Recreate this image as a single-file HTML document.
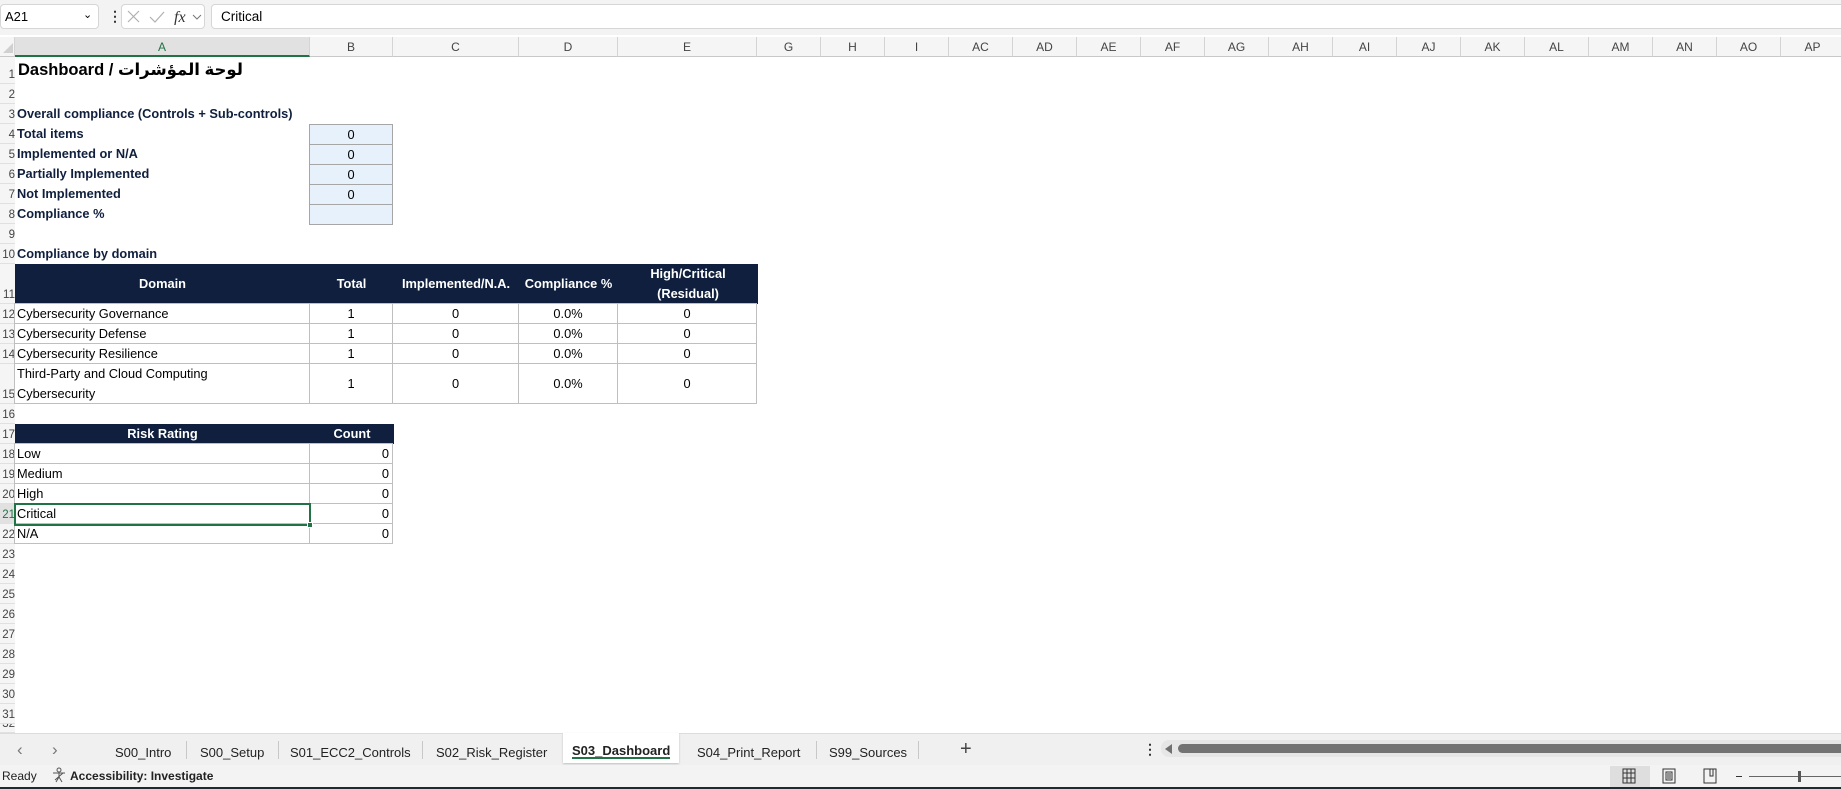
<!DOCTYPE html>
<html><head><meta charset="utf-8">
<style>
*{margin:0;padding:0;box-sizing:border-box}
body{width:1841px;height:789px;overflow:hidden;background:#fff;position:relative;font-family:"Liberation Sans Narrow","Liberation Sans",sans-serif;font-size:12.8px;color:#000}
.a{position:absolute}
.ch{position:absolute;top:37px;height:20px;border-right:1px solid #d4d4d4;color:#444;font-family:"Liberation Sans",sans-serif;font-size:12px;text-align:center;line-height:20px;background:#f5f5f5;border-bottom:1px solid #c8c8c8}
.rh{position:absolute;left:0;width:15px;overflow:hidden;color:#444;font-family:"Liberation Sans",sans-serif;font-size:11.5px;text-align:right;background:#f5f5f5;border-bottom:1px solid #e0e0e0;white-space:nowrap;display:flex;align-items:flex-end;justify-content:flex-end;padding-bottom:2px}
.lbl{position:absolute;left:17px;font-weight:bold;color:#0f1f3d;line-height:20px;white-space:nowrap}
.c{position:absolute;border:1px solid #bfbfbf;display:flex;align-items:center;justify-content:center;white-space:nowrap;margin-left:-1px;margin-top:-1px}
.h{position:absolute;background:#0f1f3d;color:#fff;font-weight:bold;display:flex;align-items:center;justify-content:center;text-align:center;line-height:20px}
.l{justify-content:flex-start;padding-left:2px}
.r{justify-content:flex-end;padding-right:3px}
.tab{position:absolute;top:745px;font-size:13px;color:#222;white-space:nowrap}
.sep{position:absolute;top:741px;width:1px;height:18px;background:#c8c8c8}
</style></head><body>
<div class="a" style="left:0;top:0;width:1841px;height:35px;background:#f3f3f3"></div>
<div class="a" style="left:0;top:4px;width:99px;height:25px;background:#fff;border:1px solid #d6d6d6;border-radius:4px;font-family:'Liberation Sans',sans-serif;font-size:13px;line-height:23px;padding-left:4px">A21<span style="position:absolute;left:82px;top:-1px;font-size:11px">&#8964;</span></div>
<div class="a" style="left:108px;top:8px;font-family:'Liberation Sans',sans-serif;font-size:14px;font-weight:bold;color:#333">&#8942;</div>
<div class="a" style="left:121px;top:4px;width:84px;height:25px;background:#fff;border:1px solid #d6d6d6;border-radius:4px"></div>
<svg class="a" style="left:126px;top:9px" width="80" height="16"><path d="M2 2L13 13M13 2L2 13" stroke="#b0b0b0" stroke-width="1.2" fill="none"/><path d="M24 8L29 13L38 3" stroke="#b0b0b0" stroke-width="1.2" fill="none"/><text x="48" y="13" font-family="Liberation Serif" font-style="italic" font-size="16" fill="#333">fx</text><path d="M67 6L71 10L75 6" stroke="#777" fill="none"/></svg>
<div class="a" style="left:211px;top:4px;width:1640px;height:25px;background:#fff;border:1px solid #d6d6d6;border-radius:4px;font-family:'Liberation Sans',sans-serif;font-size:13.5px;line-height:23px;padding-left:9px">Critical</div>
<div class="a" style="left:0;top:37px;width:15px;height:20px;background:#f5f5f5;border-right:1px solid #d4d4d4;border-bottom:1px solid #c8c8c8"></div>
<svg class="a" style="left:2px;top:42px" width="12" height="12"><path d="M11 1L11 11L1 11Z" fill="#d0d0d0"/></svg>
<div class="ch" style="left:15px;width:295px;background:#e1e1e1;color:#217346;border-bottom:2px solid #217346">A</div>
<div class="ch" style="left:310px;width:83px">B</div>
<div class="ch" style="left:393px;width:126px">C</div>
<div class="ch" style="left:519px;width:99px">D</div>
<div class="ch" style="left:618px;width:139px">E</div>
<div class="ch" style="left:757px;width:64px">G</div>
<div class="ch" style="left:821px;width:64px">H</div>
<div class="ch" style="left:885px;width:64px">I</div>
<div class="ch" style="left:949px;width:64px">AC</div>
<div class="ch" style="left:1013px;width:64px">AD</div>
<div class="ch" style="left:1077px;width:64px">AE</div>
<div class="ch" style="left:1141px;width:64px">AF</div>
<div class="ch" style="left:1205px;width:64px">AG</div>
<div class="ch" style="left:1269px;width:64px">AH</div>
<div class="ch" style="left:1333px;width:64px">AI</div>
<div class="ch" style="left:1397px;width:64px">AJ</div>
<div class="ch" style="left:1461px;width:64px">AK</div>
<div class="ch" style="left:1525px;width:64px">AL</div>
<div class="ch" style="left:1589px;width:64px">AM</div>
<div class="ch" style="left:1653px;width:64px">AN</div>
<div class="ch" style="left:1717px;width:64px">AO</div>
<div class="ch" style="left:1781px;width:64px">AP</div>
<div class="a" style="left:14px;top:57px;width:1px;height:676px;background:#d4d4d4"></div>
<div class="rh" style="top:57px;height:27px">1</div>
<div class="rh" style="top:84px;height:20px">2</div>
<div class="rh" style="top:104px;height:20px">3</div>
<div class="rh" style="top:124px;height:20px">4</div>
<div class="rh" style="top:144px;height:20px">5</div>
<div class="rh" style="top:164px;height:20px">6</div>
<div class="rh" style="top:184px;height:20px">7</div>
<div class="rh" style="top:204px;height:20px">8</div>
<div class="rh" style="top:224px;height:20px">9</div>
<div class="rh" style="top:244px;height:20px">10</div>
<div class="rh" style="top:264px;height:40px">11</div>
<div class="rh" style="top:304px;height:20px">12</div>
<div class="rh" style="top:324px;height:20px">13</div>
<div class="rh" style="top:344px;height:20px">14</div>
<div class="rh" style="top:364px;height:40px">15</div>
<div class="rh" style="top:404px;height:20px">16</div>
<div class="rh" style="top:424px;height:20px">17</div>
<div class="rh" style="top:444px;height:20px">18</div>
<div class="rh" style="top:464px;height:20px">19</div>
<div class="rh" style="top:484px;height:20px">20</div>
<div class="rh" style="top:504px;height:20px;background:#e1e1e1;color:#217346">21</div>
<div class="rh" style="top:524px;height:20px">22</div>
<div class="rh" style="top:544px;height:20px">23</div>
<div class="rh" style="top:564px;height:20px">24</div>
<div class="rh" style="top:584px;height:20px">25</div>
<div class="rh" style="top:604px;height:20px">26</div>
<div class="rh" style="top:624px;height:20px">27</div>
<div class="rh" style="top:644px;height:20px">28</div>
<div class="rh" style="top:664px;height:20px">29</div>
<div class="rh" style="top:684px;height:20px">30</div>
<div class="rh" style="top:704px;height:20px">31</div>
<div class="rh" style="top:724px;height:9px">32</div>
<div class="a" style="left:18px;top:60px;font-family:'Liberation Sans','Noto Sans CJK SC','DejaVu Sans',sans-serif;font-size:16.5px;font-weight:bold;color:#000;white-space:nowrap">Dashboard / لوحة المؤشرات</div>
<div class="lbl" style="top:104px">Overall compliance (Controls + Sub-controls)</div>
<div class="lbl" style="top:124px">Total items</div>
<div class="lbl" style="top:144px">Implemented or N/A</div>
<div class="lbl" style="top:164px">Partially Implemented</div>
<div class="lbl" style="top:184px">Not Implemented</div>
<div class="lbl" style="top:204px">Compliance %</div>
<div class="lbl" style="top:244px">Compliance by domain</div>
<div class="c" style="left:310px;top:125px;width:84px;height:21px;background:#e7f1fb;border-color:#a6a6a6">0</div>
<div class="c" style="left:310px;top:145px;width:84px;height:21px;background:#e7f1fb;border-color:#a6a6a6">0</div>
<div class="c" style="left:310px;top:165px;width:84px;height:21px;background:#e7f1fb;border-color:#a6a6a6">0</div>
<div class="c" style="left:310px;top:185px;width:84px;height:21px;background:#e7f1fb;border-color:#a6a6a6">0</div>
<div class="c" style="left:310px;top:205px;width:84px;height:21px;background:#e7f1fb;border-color:#a6a6a6"></div>
<div class="h" style="left:15px;top:264px;width:743px;height:40px"></div>
<div class="h" style="left:15px;top:264px;width:295px;height:40px;background:none">Domain</div>
<div class="h" style="left:310px;top:264px;width:83px;height:40px;background:none">Total</div>
<div class="h" style="left:393px;top:264px;width:126px;height:40px;background:none">Implemented/N.A.</div>
<div class="h" style="left:519px;top:264px;width:99px;height:40px;background:none">Compliance %</div>
<div class="h" style="left:618px;top:264px;width:140px;height:40px;background:none">High/Critical<br>(Residual)</div>
<div class="c l" style="left:15px;top:304px;width:296px;height:21px">Cybersecurity Governance</div>
<div class="c" style="left:310px;top:304px;width:84px;height:21px">1</div>
<div class="c" style="left:393px;top:304px;width:127px;height:21px">0</div>
<div class="c" style="left:519px;top:304px;width:100px;height:21px">0.0%</div>
<div class="c" style="left:618px;top:304px;width:140px;height:21px">0</div>
<div class="c l" style="left:15px;top:324px;width:296px;height:21px">Cybersecurity Defense</div>
<div class="c" style="left:310px;top:324px;width:84px;height:21px">1</div>
<div class="c" style="left:393px;top:324px;width:127px;height:21px">0</div>
<div class="c" style="left:519px;top:324px;width:100px;height:21px">0.0%</div>
<div class="c" style="left:618px;top:324px;width:140px;height:21px">0</div>
<div class="c l" style="left:15px;top:344px;width:296px;height:21px">Cybersecurity Resilience</div>
<div class="c" style="left:310px;top:344px;width:84px;height:21px">1</div>
<div class="c" style="left:393px;top:344px;width:127px;height:21px">0</div>
<div class="c" style="left:519px;top:344px;width:100px;height:21px">0.0%</div>
<div class="c" style="left:618px;top:344px;width:140px;height:21px">0</div>
<div class="c l" style="left:15px;top:364px;width:296px;height:41px;white-space:normal;line-height:20px">Third-Party and Cloud Computing<br>Cybersecurity</div>
<div class="c" style="left:310px;top:364px;width:84px;height:41px">1</div>
<div class="c" style="left:393px;top:364px;width:127px;height:41px">0</div>
<div class="c" style="left:519px;top:364px;width:100px;height:41px">0.0%</div>
<div class="c" style="left:618px;top:364px;width:140px;height:41px">0</div>
<div class="h" style="left:15px;top:424px;width:295px;height:20px">Risk Rating</div>
<div class="h" style="left:310px;top:424px;width:84px;height:20px">Count</div>
<div class="c l" style="left:15px;top:444px;width:296px;height:21px">Low</div>
<div class="c r" style="left:310px;top:444px;width:84px;height:21px">0</div>
<div class="c l" style="left:15px;top:464px;width:296px;height:21px">Medium</div>
<div class="c r" style="left:310px;top:464px;width:84px;height:21px">0</div>
<div class="c l" style="left:15px;top:484px;width:296px;height:21px">High</div>
<div class="c r" style="left:310px;top:484px;width:84px;height:21px">0</div>
<div class="c l" style="left:15px;top:504px;width:296px;height:21px">Critical</div>
<div class="c r" style="left:310px;top:504px;width:84px;height:21px">0</div>
<div class="c l" style="left:15px;top:524px;width:296px;height:21px">N/A</div>
<div class="c r" style="left:310px;top:524px;width:84px;height:21px">0</div>
<div class="a" style="left:14px;top:503px;width:297px;height:23px;border:2px solid #217346"></div>
<div class="a" style="left:307px;top:522px;width:6px;height:6px;background:#217346;border:1px solid #fff"></div>
<div class="a" style="left:0;top:733px;width:1841px;height:32px;background:#f0f0f0;border-top:1px solid #dcdcdc"></div>
<div class="a" style="left:17px;top:740px;font-size:17px;color:#777;font-family:'Liberation Sans',sans-serif">&#8249;</div>
<div class="a" style="left:52px;top:740px;font-size:17px;color:#777;font-family:'Liberation Sans',sans-serif">&#8250;</div>
<div class="tab" style="left:115px">S00_Intro</div>
<div class="sep" style="left:186px"></div>
<div class="tab" style="left:200px">S00_Setup</div>
<div class="sep" style="left:278px"></div>
<div class="tab" style="left:290px">S01_ECC2_Controls</div>
<div class="sep" style="left:422px"></div>
<div class="tab" style="left:436px">S02_Risk_Register</div>
<div class="a" style="left:563px;top:733px;width:116px;height:30px;background:#fff;box-shadow:0 1px 2px rgba(0,0,0,.2)"></div>
<div class="tab" style="left:572px;top:743px;font-weight:bold">S03_Dashboard</div>
<div class="a" style="left:572px;top:757px;width:98px;height:2px;background:#217346"></div>
<div class="tab" style="left:697px">S04_Print_Report</div>
<div class="sep" style="left:816px"></div>
<div class="tab" style="left:829px">S99_Sources</div>
<div class="sep" style="left:918px"></div>
<div class="a" style="left:960px;top:738px;font-size:20px;color:#444;font-family:'Liberation Sans',sans-serif">+</div>
<div class="a" style="left:1143px;top:741px;font-size:14px;font-weight:bold;color:#333;font-family:'Liberation Sans',sans-serif">&#8942;</div>
<div class="a" style="left:1161px;top:740px;width:690px;height:17px;background:#e6e6e6;border-radius:8px"></div>
<svg class="a" style="left:1165px;top:744px" width="8" height="10"><path d="M7 0L0 5L7 10Z" fill="#707070"/></svg>
<div class="a" style="left:1178px;top:744px;width:670px;height:9px;background:#737373;border-radius:5px"></div>
<div class="a" style="left:0;top:765px;width:1841px;height:22px;background:#f3f3f3"></div>
<div class="a" style="left:2px;top:769px;font-size:12px;color:#222">Ready</div>
<svg class="a" style="left:52px;top:767px" width="14" height="16"><circle cx="7" cy="3" r="2" fill="none" stroke="#555"/><path d="M1 6L13 6M7 6L7 10M4 15L7 10L10 15M3 13L11 6" stroke="#555" fill="none"/></svg>
<div class="a" style="left:70px;top:769px;font-size:12px;font-weight:bold;color:#222">Accessibility: Investigate</div>
<div class="a" style="left:1610px;top:766px;width:40px;height:21px;background:#dedede"></div>
<svg class="a" style="left:1622px;top:768px" width="14" height="16"><path d="M1 1H13V15H1ZM5 1V15M9 1V15M1 5H13M1 10H13" stroke="#333" fill="none"/></svg>
<svg class="a" style="left:1662px;top:768px" width="14" height="16"><path d="M1 1H13V15H1ZM4 4H10V12H4ZM5 6H9M5 8H9M5 10H9" stroke="#333" fill="none"/></svg>
<svg class="a" style="left:1703px;top:768px" width="14" height="16"><path d="M1 1H13V15H1ZM7 1V8H10V1" stroke="#333" fill="none"/></svg>
<div class="a" style="left:1736px;top:776px;width:6px;height:1px;background:#333"></div>
<div class="a" style="left:1749px;top:776px;width:92px;height:1px;background:#666"></div>
<div class="a" style="left:1798px;top:771px;width:3px;height:11px;background:#555"></div>
<div class="a" style="left:0;top:787px;width:1841px;height:2px;background:#1f2a30"></div>
</body></html>
